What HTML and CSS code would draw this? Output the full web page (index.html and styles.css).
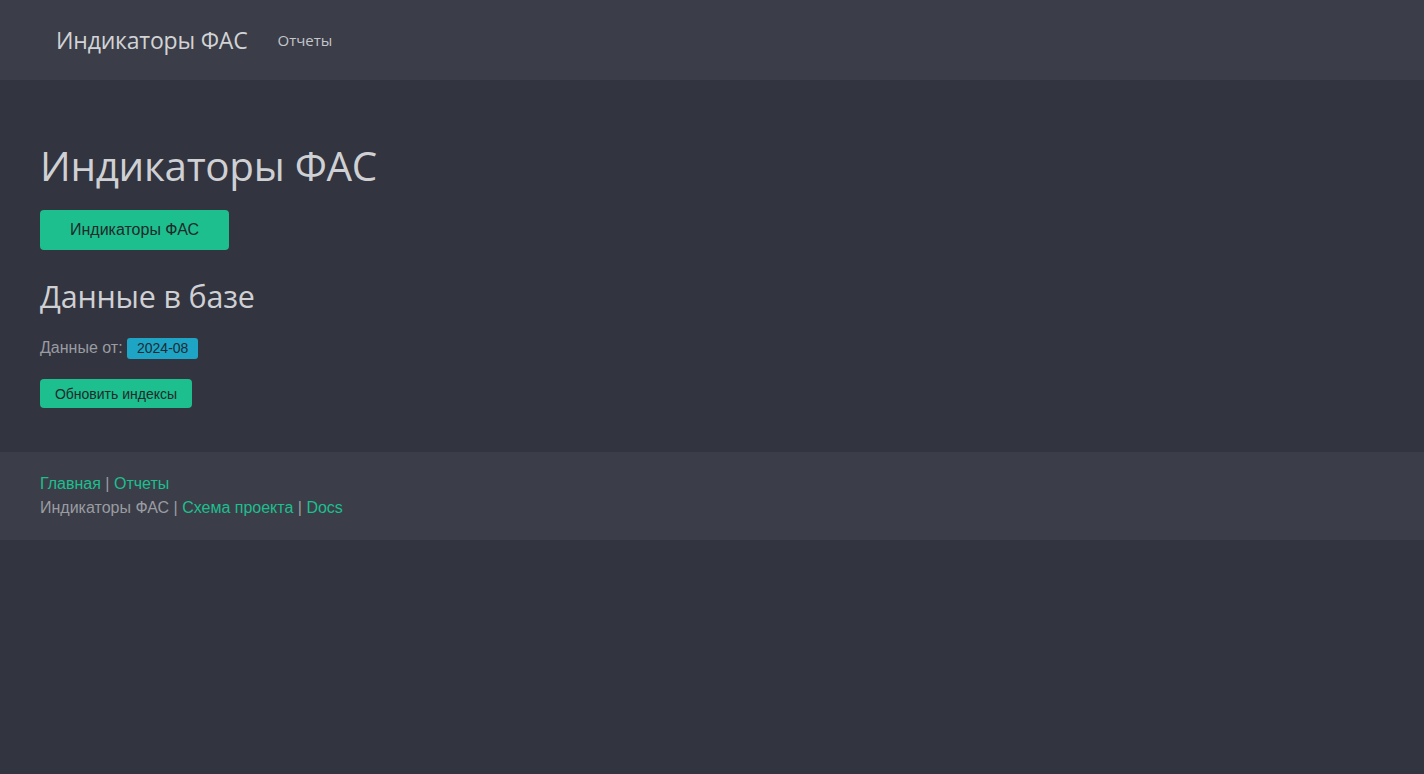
FILE: index.html
```html
<!DOCTYPE html>
<html lang="ru">
<head>
<meta charset="utf-8">
<title>Индикаторы ФАС</title>
<link rel="stylesheet" href="styles.css">
</head>
<body>
<nav class="navbar">
  <a class="brand" href="#">Индикаторы ФАС</a>
  <a class="nav-link" href="#">Отчеты</a>
</nav>
<main class="content">
  <h1 class="title">Индикаторы ФАС</h1>
  <a class="btn btn-lg" href="#">Индикаторы ФАС</a>
  <h2 class="subtitle">Данные в базе</h2>
  <p class="meta">Данные от: <span class="badge">2024-08</span></p>
  <a class="btn btn-sm" href="#">Обновить индексы</a>
</main>
<footer class="footer">
  <div class="line"><a href="#">Главная</a> | <a href="#">Отчеты</a></div>
  <div class="line">Индикаторы ФАС | <a href="#">Схема проекта</a> | <a href="#">Docs</a></div>
</footer>
</body>
</html>
```

FILE: styles.css
```css
html, body {
  margin: 0;
  padding: 0;
}
body {
  background: #32343f;
  font-family: "Liberation Sans", Arial, sans-serif;
  color: #9a9ca2;
  font-size: 16px;
}
a {
  text-decoration: none;
}
.navbar {
  height: 80px;
  background: #3b3e48;
  display: flex;
  align-items: center;
  padding: 0 56px;
  gap: 30px;
}
.brand {
  font-family: "Open Sans", "Noto Sans", sans-serif;
  font-size: 23px;
  color: #d2d3d6;
  letter-spacing: -0.2px;
}
.nav-link {
  font-family: "Open Sans", "Noto Sans", sans-serif;
  font-size: 15px;
  color: #c5c6ca;
}
.content {
  padding: 70px 40px 44px;
  display: flex;
  flex-direction: column;
  align-items: flex-start;
}
.title {
  font-family: "Open Sans", "Noto Sans", sans-serif;
  font-weight: 400;
  font-size: 40.4px;
  color: #cfd0d4;
  margin: -8px 0 20px;
  line-height: 1.2;
  letter-spacing: -0.3px;
}
.btn {
  background: #1dbf8e;
  color: #1f2a2a;
  border-radius: 4px;
  display: inline-flex;
  align-items: center;
  justify-content: center;
}
.btn-lg {
  width: 189px;
  height: 40px;
  font-size: 16px;
}
.subtitle {
  font-family: "Open Sans", "Noto Sans", sans-serif;
  font-weight: 400;
  font-size: 30.5px;
  color: #cfd0d4;
  margin: 28px 0 0;
  line-height: 1.2;
  letter-spacing: -0.2px;
}
.meta {
  margin: 21px 0 19px;
  color: #9a9ca2;
  line-height: 24px;
}
.badge {
  display: inline-block;
  background: #1ea5c6;
  color: #1d2a33;
  font-size: 14px;
  padding: 0 10px;
  line-height: 21px;
  border-radius: 3px;
}
.btn-sm {
  width: 152px;
  height: 29px;
  font-size: 14px;
}
.footer {
  background: #3b3e48;
  padding: 20px 40px 20px;
  line-height: 24px;
  color: #9a9ca2;
}
.footer a {
  color: #1dbf8e;
}
```
